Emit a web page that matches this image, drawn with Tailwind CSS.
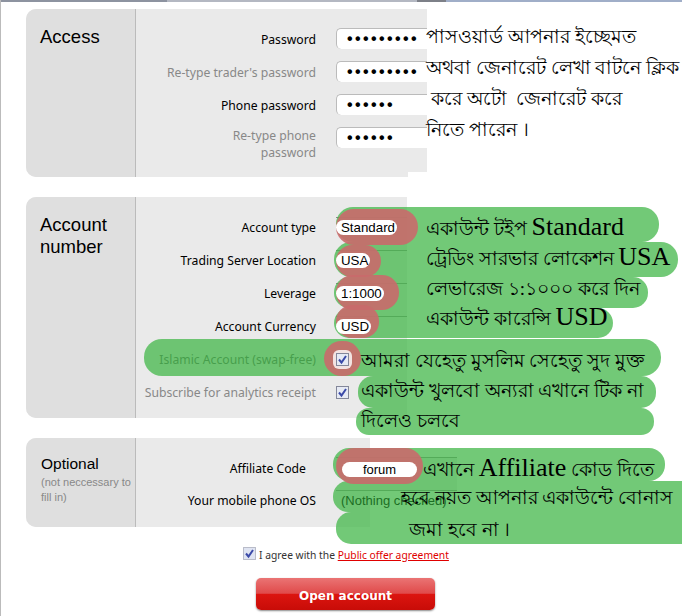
<!DOCTYPE html>
<html lang="en">
  <head>
    <meta charset="UTF-8" />
    <script src="https://cdn.jsdelivr.net/npm/@tailwindcss/browser@4"></script>
    <title>Open account</title>
  </head>
  <body class="bg-white font-['Noto_Sans',sans-serif] text-[12.2px] text-black">
    <div class="relative w-[682px] h-[616px] overflow-hidden border-l border-[#bbb]">
      <div class="h-[2px] flex">
        <div class="w-[166px] bg-[#8d93a0]"></div>
        <div class="w-[250px] bg-[#b4b8c2]"></div>
        <div class="w-[29px] bg-[#7d8088]"></div>
        <div class="flex-1 bg-[#a0aec8]"></div>
      </div>

      <!-- access -->
      <section class="ml-[25px] mt-[7px] w-[401px] h-[168px] flex rounded-l-[10px] overflow-hidden bg-[#eaeaea]">
        <div class="w-[110px] shrink-0 bg-[#dfdfdf] border-r border-[#bbb] pl-[14px] pt-[17px] text-[18.5px] leading-[22px] font-['Liberation_Sans',sans-serif]">Access</div>
        <div class="pt-[19px] flex flex-col gap-[12px]">
          <div class="flex items-center gap-[20px] h-[21px]">
            <label class="w-[180px] text-right mt-[3px]">Password</label>
            <div class="w-[100px] h-[21px] bg-white rounded-l-[5px] border-t border-l border-[#bbb] pl-[10px] text-[16px] font-bold font-['Liberation_Sans',sans-serif] leading-[20px] tracking-[2.4px] overflow-hidden whitespace-nowrap">•••••••••</div>
          </div>
          <div class="flex items-center gap-[20px] h-[21px]">
            <label class="w-[180px] text-right text-[#888] mt-[3px]">Re-type trader's password</label>
            <div class="w-[100px] h-[21px] bg-white rounded-l-[5px] border-t border-l border-[#bbb] pl-[10px] text-[16px] font-bold font-['Liberation_Sans',sans-serif] leading-[20px] tracking-[2.4px] overflow-hidden whitespace-nowrap">•••••••••</div>
          </div>
          <div class="flex items-center gap-[20px] h-[21px]">
            <label class="w-[180px] text-right mt-[3px]">Phone password</label>
            <div class="w-[100px] h-[21px] bg-white rounded-l-[5px] border-t border-l border-[#bbb] pl-[10px] text-[16px] font-bold font-['Liberation_Sans',sans-serif] leading-[20px] tracking-[2.4px] overflow-hidden whitespace-nowrap">••••••</div>
          </div>
          <div class="flex gap-[20px] h-[21px]">
            <label class="w-[180px] text-right text-[#888] pl-[60px] leading-[17px]">Re-type phone password</label>
            <div class="w-[100px] h-[21px] bg-white rounded-l-[5px] border-t border-l border-[#bbb] pl-[10px] text-[16px] font-bold font-['Liberation_Sans',sans-serif] leading-[20px] tracking-[2.4px] overflow-hidden whitespace-nowrap">••••••</div>
          </div>
        </div>
      </section>

      <!-- account number -->
      <section class="ml-[25px] mt-[20px] w-[381px] h-[221px] flex rounded-l-[10px] overflow-hidden bg-[#eaeaea]">
        <div class="w-[110px] shrink-0 bg-[#dfdfdf] border-r border-[#bbb] pl-[14px] pt-[17px] text-[18.5px] leading-[22px] font-['Liberation_Sans',sans-serif]">Account<br />number</div>
        <div class="pt-[20px] flex flex-col gap-[12px]">
          <div class="flex items-center gap-[20px] h-[21px]">
            <label class="w-[180px] text-right mt-[2px]">Account type</label>
            <div class="w-[71px] border-t border-[#888] h-[21px] font-['Liberation_Sans',sans-serif] text-[13.3px]"><span class="relative z-10 inline-block h-[15px] leading-[15px] rounded-full bg-white pl-[5px] pr-[2px]">Standard</span></div>
          </div>
          <div class="flex items-center gap-[20px] h-[21px]">
            <label class="w-[180px] text-right whitespace-nowrap mt-[2px]">Trading Server Location</label>
            <div class="w-[71px] border-t border-[#888] h-[21px] font-['Liberation_Sans',sans-serif] text-[13.3px]"><span class="relative z-10 inline-block h-[15px] leading-[15px] rounded-full bg-white pl-[5px] pr-[2px]">USA</span></div>
          </div>
          <div class="flex items-center gap-[20px] h-[21px]">
            <label class="w-[180px] text-right mt-[2px]">Leverage</label>
            <div class="w-[71px] border-t border-[#888] h-[21px] font-['Liberation_Sans',sans-serif] text-[13.3px]"><span class="relative z-10 inline-block h-[15px] leading-[15px] rounded-full bg-white pl-[5px] pr-[2px]">1:1000</span></div>
          </div>
          <div class="flex items-center gap-[20px] h-[21px]">
            <label class="w-[180px] text-right mt-[2px]">Account Currency</label>
            <div class="w-[71px] border-t border-[#888] h-[21px] font-['Liberation_Sans',sans-serif] text-[13.3px]"><span class="relative z-10 inline-block h-[15px] leading-[15px] rounded-full bg-white pl-[5px] pr-[2px]">USD</span></div>
          </div>
          <div class="flex items-center gap-[20px] h-[21px]">
            <label class="w-[180px] text-right text-[#555] whitespace-nowrap mt-[2px]">Islamic Account (swap-free)</label>
            <div class="relative z-10 p-[3px] -m-[3px] bg-white/80 rounded-[6px]">
              <svg width="13" height="13" viewBox="0 0 13 13" class="block"><rect x="0.5" y="0.5" width="12" height="12" fill="#e6eaf4" stroke="#83879a" /><path d="M3 6.5 L5.5 9.5 L10 3" fill="none" stroke="#3b4aa8" stroke-width="2" /></svg>
            </div>
          </div>
          <div class="flex items-center gap-[20px] h-[21px]">
            <label class="w-[180px] text-right text-[#888] whitespace-nowrap mt-[2px]">Subscribe for analytics receipt</label>
            <svg width="13" height="13" viewBox="0 0 13 13" class="block"><rect x="0.5" y="0.5" width="12" height="12" fill="#e6eaf4" stroke="#83879a" /><path d="M3 6.5 L5.5 9.5 L10 3" fill="none" stroke="#3b4aa8" stroke-width="2" /></svg>
          </div>
        </div>
      </section>

      <!-- optional -->
      <section class="ml-[25px] mt-[20px] w-[344px] h-[89px] flex rounded-l-[10px] bg-[#eaeaea]">
        <div class="w-[110px] shrink-0 rounded-l-[10px] bg-[#dfdfdf] border-r border-[#bbb] pl-[15px] pt-[16px]">
          <div class="text-[15.5px] leading-[20px] font-['Liberation_Sans',sans-serif]">Optional</div>
          <div class="text-[11px] leading-[15px] mt-[1px] text-[#888] font-['Liberation_Sans',sans-serif]">(not neccessary to fill in)</div>
        </div>
        <div class="pt-[19px] flex flex-col gap-[12px]">
          <div class="flex gap-[20px] h-[21px]">
            <label class="w-[180px] text-right pr-[10px] leading-[23px]">Affiliate Code</label>
            <div class="w-[121px] h-[33px] shrink-0 bg-[#eaeaea] border-t border-[#888] pt-[2px] pl-[6px] font-['Liberation_Sans',sans-serif] text-[13px]"><span class="relative z-10 inline-block w-[75px] h-[15px] leading-[15px] rounded-full bg-white text-center">forum</span></div>
          </div>
          <div class="flex gap-[20px] h-[21px]">
            <label class="w-[180px] text-right whitespace-nowrap leading-[21px]">Your mobile phone OS</label>
            <div class="w-[121px] h-[19px] shrink-0 border-t border-[#888] pl-[5px] font-['Liberation_Sans',sans-serif] text-[13px] leading-[19px] whitespace-nowrap"><span class="relative z-10 text-[#1c6e24]">(Nothing checked)</span></div>
          </div>
        </div>
      </section>

      <div class="mt-[20px] ml-[242px] flex items-center gap-[3px] text-[10.3px] leading-[16px] text-[#333]">
        <svg width="13" height="13" viewBox="0 0 13 13" class="block -mt-[3px]"><rect x="0.5" y="0.5" width="12" height="12" fill="#dfe4f2" stroke="#83879a" stroke-dasharray="1 1" /><path d="M3 6.5 L5.5 9.5 L10 3" fill="none" stroke="#3b4aa8" stroke-width="2" /></svg>
        <span>I agree with the <a class="text-[#e00000] underline">Public offer agreement</a></span>
      </div>
      <button class="block mt-[15px] ml-[255px] w-[179px] h-[32px] rounded-[5px] bg-[linear-gradient(#ea7474,#e04a4a_48%,#dc1510_50%,#c80c08)] text-white font-bold text-[12px] pt-[3px] font-['DejaVu_Sans',sans-serif] shadow-[0_1px_2px_#888]">Open account</button>

      <!-- annotation layer over the form -->
      <div class="absolute left-[426px] top-[9px] w-[256px] h-[163px] bg-white pt-[12px] font-['Liberation_Serif',serif] text-[19px] leading-[31px] whitespace-nowrap">
        <div class="-ml-[1px]">পাসওয়ার্ড আপনার ইচ্ছেমত</div>
        <div class="-ml-[1px]">অথবা জেনারেট লেখা বাটনে ক্লিক</div>
        <div class="-ml-[1px]">&nbsp;করে অটো &nbsp;জেনারেট করে</div>
        <div class="-ml-[1px]">নিতে পারেন ।</div>
      </div>
      <div class="absolute left-[407px] top-[172px] w-[275px] h-[7px] bg-white"></div>

      <div class="absolute left-[335px] top-[207px] w-[323px] h-[35px] rounded-[17px] bg-[#43b74a]/75"></div>
      <div class="absolute left-[333px] top-[242px] w-[344px] h-[35px] rounded-[17px] bg-[#43b74a]/75"></div>
      <div class="absolute left-[333px] top-[277px] w-[314px] h-[31px] rounded-[15px] bg-[#43b74a]/75"></div>
      <div class="absolute left-[333px] top-[308px] w-[279px] h-[30px] rounded-[15px] bg-[#43b74a]/75"></div>
      <div class="absolute left-[143px] top-[339px] w-[517px] h-[37px] rounded-[18px] bg-[#43b74a]/75"></div>
      <div class="absolute left-[357px] top-[376px] w-[298px] h-[32px] rounded-[15px] bg-[#43b74a]/75"></div>
      <div class="absolute left-[355px] top-[408px] w-[298px] h-[27px] rounded-[13px] bg-[#43b74a]/75"></div>
      <div class="absolute left-[332px] top-[448px] w-[332px] h-[33px] rounded-[16px] bg-[#43b74a]/75"></div>
      <div class="absolute left-[332px] top-[481px] w-[350px] h-[31px] rounded-l-[15px] bg-[#43b74a]/75"></div>
      <div class="absolute left-[335px] top-[512px] w-[347px] h-[32px] rounded-l-[15px] bg-[#43b74a]/75"></div>

      <div class="absolute left-[335px] top-[209px] w-[82px] h-[36px] rounded-[18px] bg-[#c96a6c]/90"></div>
      <div class="absolute left-[335px] top-[245px] w-[45px] h-[32px] rounded-[16px] bg-[#c96a6c]/90"></div>
      <div class="absolute left-[335px] top-[275px] w-[63px] h-[35px] rounded-[17px] bg-[#c96a6c]/90"></div>
      <div class="absolute left-[335px] top-[305px] w-[43px] h-[33px] rounded-[16px] bg-[#c96a6c]/90"></div>
      <div class="absolute left-[323px] top-[341px] w-[37px] h-[35px] rounded-full bg-[#c96a6c]/90"></div>
      <div class="absolute left-[335px] top-[448px] w-[87px] h-[36px] rounded-[18px] bg-[#c96a6c]/90"></div>

      <div class="absolute z-20 left-[425px] top-[214px] font-['Liberation_Serif',serif] text-[19px] leading-[30px] whitespace-nowrap">
        <div>একাউন্ট টইপ <span class="text-[26px] leading-none">Standard</span></div>
        <div>ট্রেডিং সারভার লোকেশন <span class="text-[26px] leading-none">USA</span></div>
        <div>লেভারেজ ১:১০০০ করে দিন</div>
        <div>একাউন্ট কারেন্সি <span class="text-[26px] leading-none">USD</span></div>
      </div>
      <div class="absolute z-20 left-[360px] top-[346px] font-['Liberation_Serif',serif] text-[19px] leading-[30px] whitespace-nowrap">
        <div>আমরা যেহেতু মুসলিম সেহেতু সুদ মুক্ত</div>
        <div>একাউন্ট খুলবো অন্যরা এখানে টিক না</div>
        <div>দিলেও চলবে</div>
      </div>
      <div class="absolute z-20 left-[422px] top-[455px] font-['Liberation_Serif',serif] text-[19px] leading-[30px] whitespace-nowrap">এখানে <span class="text-[26px] leading-none">Affiliate</span> কোড দিতে</div>
      <div class="absolute z-20 left-[400px] top-[483px] font-['Liberation_Serif',serif] text-[19px] leading-[30px] whitespace-nowrap">হবে নয়ত আপনার একাউন্টে বোনাস</div>
      <div class="absolute z-20 left-[408px] top-[515px] font-['Liberation_Serif',serif] text-[19px] leading-[30px] whitespace-nowrap">জমা হবে না ।</div>
    </div>
  </body>
</html>
